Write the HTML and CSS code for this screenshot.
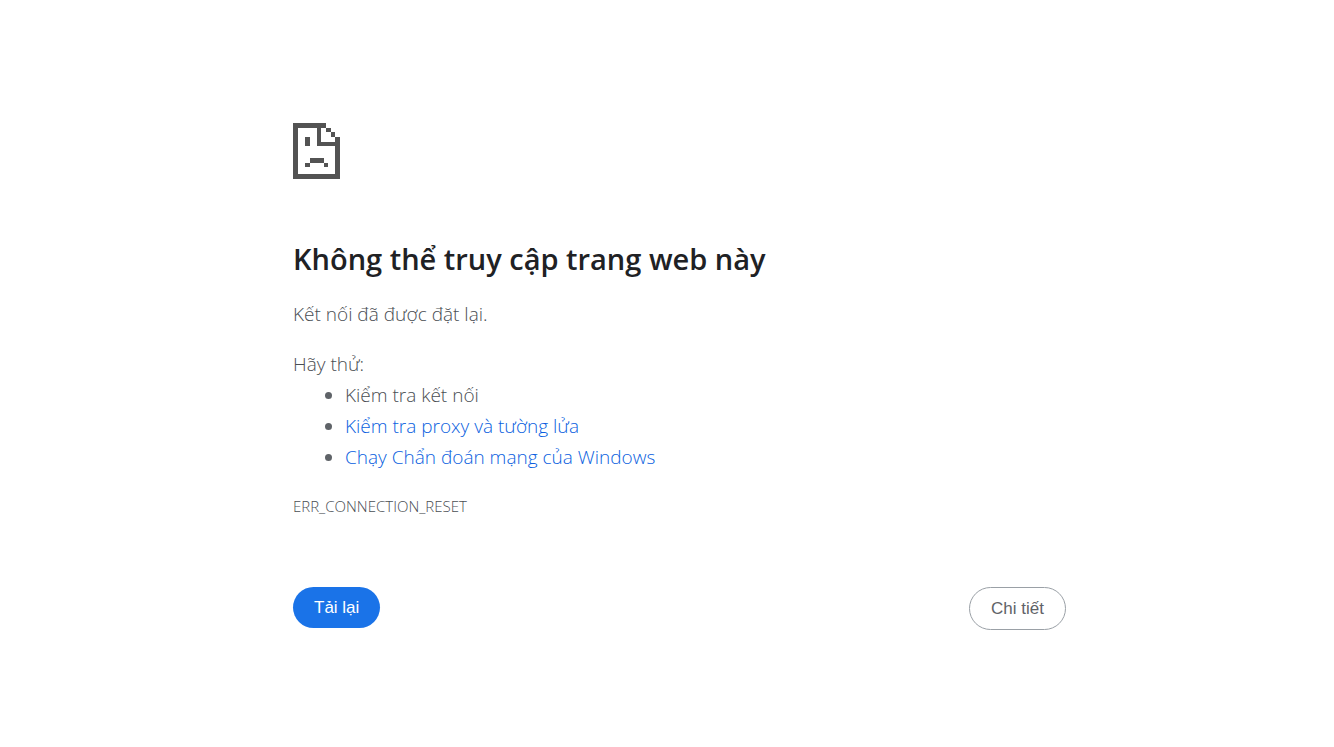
FILE: index.html
```html
<!DOCTYPE html>
<html lang="vi">
<head>
<meta charset="utf-8">
<title>Không thể truy cập trang web này</title>
<link rel="stylesheet" href="styles.css">
</head>
<body>
<main class="page">
  <svg class="icon" viewBox="0 0 20 24" shape-rendering="crispEdges" aria-hidden="true">
    <path fill="#535353" fill-rule="evenodd" d="M0 0h14v2h2v2h2v2h2v18H0zM2 2v20h16V10h-8V2zM12 2v6h6V6h-2V4h-2V2zM5 6h2v4H5zM7 15h6v2H7zM5 17h2v2H5zM13 17h2v2h-2z"/>
  </svg>
  <h1 class="title">Không thể truy cập trang web này</h1>
  <p class="summary">Kết nối đã được đặt lại.</p>
  <div class="suggestions">
    <p class="lead">Hãy thử:</p>
    <ul class="list">
      <li>Kiểm tra kết nối</li>
      <li><a class="link" href="#">Kiểm tra proxy và tường lửa</a></li>
      <li><a class="link" href="#">Chạy Chẩn đoán mạng của Windows</a></li>
    </ul>
  </div>
  <div class="code">ERR_CONNECTION_RESET</div>
  <div class="actions">
    <button class="button primary" type="button">Tải lại</button>
    <button class="button secondary" type="button">Chi tiết</button>
  </div>
</main>
</body>
</html>
```
FILE: styles.css
```css
body {
  margin: 0;
  background: #fff;
  color: #4a4e53;
  font: 300 19px/31px "Open Sans", "Noto Sans", sans-serif;
}
.page {
  box-sizing: border-box;
  max-width: 798px;
  margin: 0 auto;
  padding: 123px 0 0 25px;
}
.icon { display: block; width: 47px; height: 56px; }
.title {
  margin: 60px 0 20px;
  color: #202124;
  font-size: 29px;
  font-weight: 600;
  line-height: 40px;
}
.summary { margin: 0 0 19px; }
.lead { margin: 0; }
.list { margin: 0; padding-left: 52px; }
.list li::marker { color: #5f6368; }
.link { color: #0b5fe0; text-decoration: none; }
.code { margin-top: 18px; font-size: 15px; }
.actions { display: flex; justify-content: space-between; align-items: flex-start; margin-top: 65px; }
.button {
  padding: 0 21px;
  border: 0;
  border-radius: 22px;
  font: 17px/41px "Liberation Sans", Arial, sans-serif;
  cursor: pointer;
}
.primary { background: #1a73e8; color: #fff; }
.secondary { border: 1px solid #9aa0a6; background: #fff; color: #5f6368; }
```
